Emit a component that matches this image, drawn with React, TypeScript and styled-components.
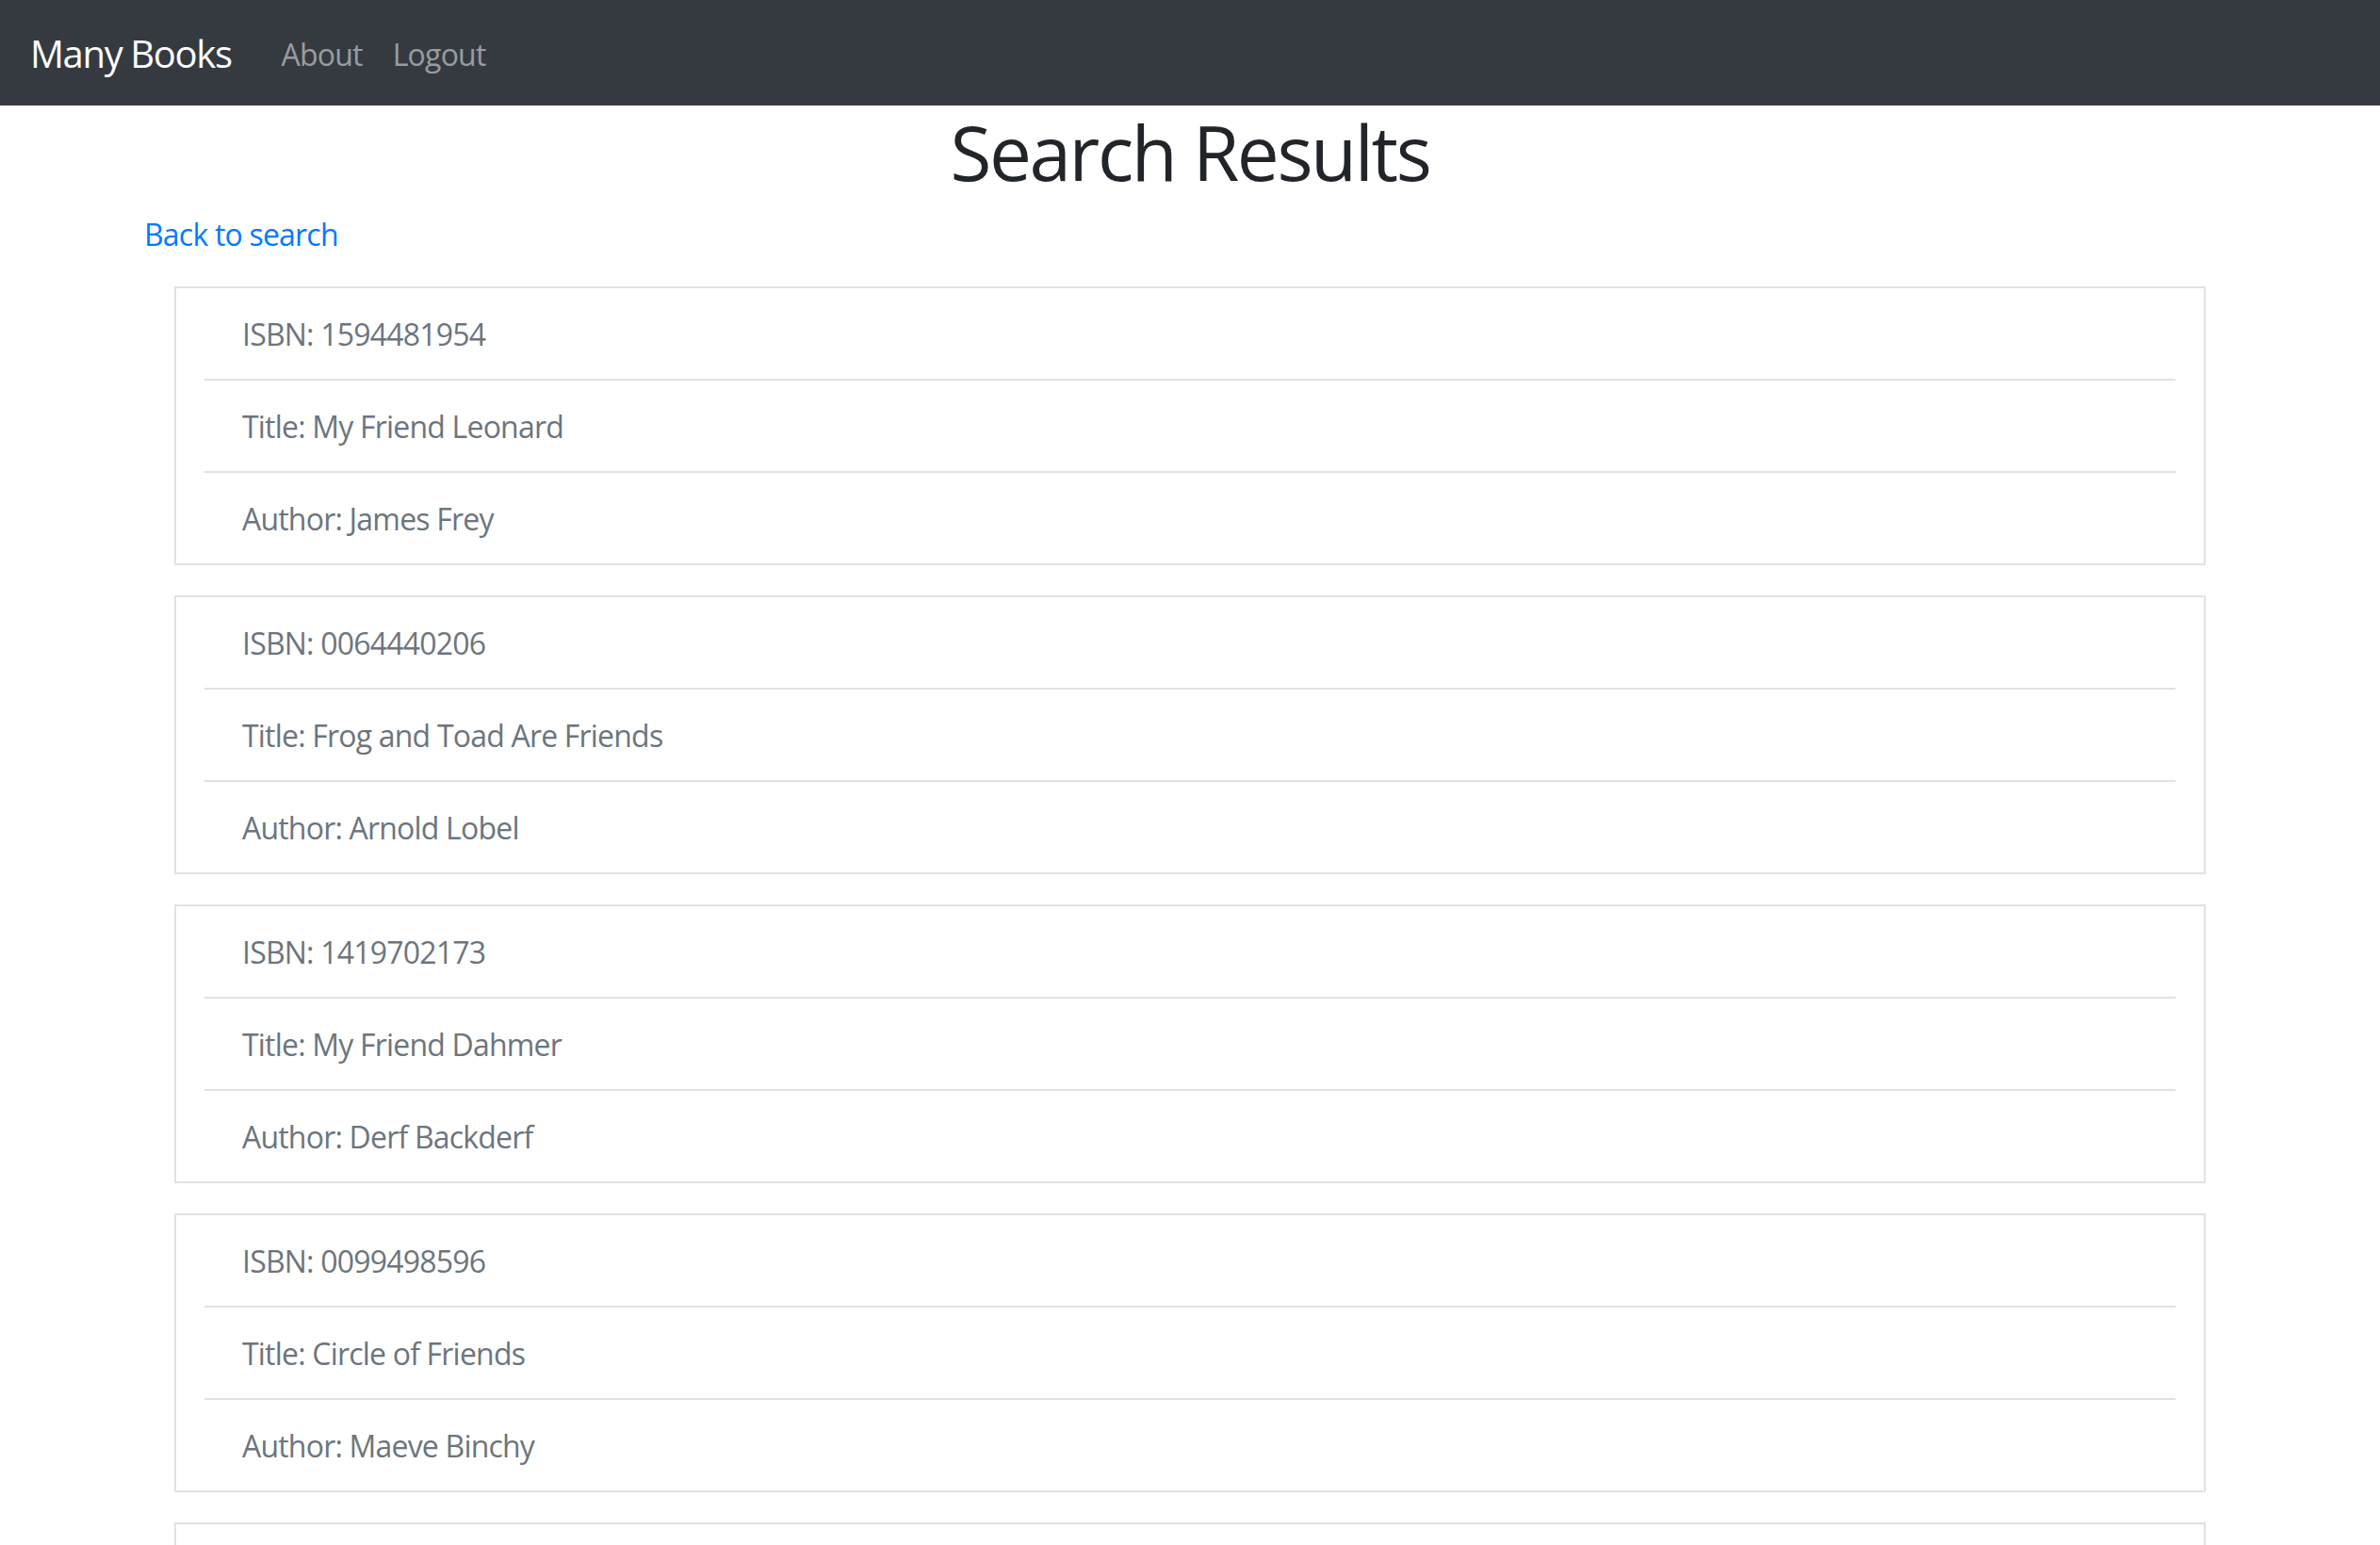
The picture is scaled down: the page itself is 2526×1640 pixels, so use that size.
import React from "react";
import styled, { createGlobalStyle } from "styled-components";

const GlobalStyle = createGlobalStyle`
  html, body {
    margin: 0;
    padding: 0;
    background: #ffffff;
  }
  body {
    font-family: "Segoe UI", "Open Sans", "Noto Sans", sans-serif;
    font-size: 32px;
    line-height: 1.5;
    letter-spacing: -0.025em;
    color: #212529;
  }
  *, *::before, *::after { box-sizing: border-box; }
`;

const NavBar = styled.nav`
  display: flex;
  align-items: center;
  height: 112px;
  padding: 16px 32px;
  background: #343a40;
`;

const Brand = styled.a`
  font-size: 40px;
  line-height: 60px;
  padding: 11px 0 9px;
  margin-right: 37px;
  letter-spacing: -0.034em;
  color: #ffffff;
  text-decoration: none;
  white-space: nowrap;
`;

const NavLinks = styled.div`
  display: flex;
  align-items: center;
`;

const NavLink = styled.a`
  font-size: 32px;
  line-height: 48px;
  padding: 18px 16px 14px;
  color: rgba(255, 255, 255, 0.5);
  text-decoration: none;
`;

const Container = styled.main`
  width: 2280px;
  margin: 0 auto;
  padding: 0 30px;
`;

const Heading = styled.h1`
  margin: 0 0 16px;
  padding-top: 2px;
  height: 96px;
  font-size: 80px;
  font-weight: 500;
  line-height: 94px;
  letter-spacing: -0.03em;
  text-align: center;
  color: #212529;
`;

const BackLink = styled.a`
  display: inline-block;
  margin-bottom: 32px;
  padding-top: 1px;
  height: 48px;
  font-size: 32px;
  line-height: 47px;
  color: #007bff;
  text-decoration: none;
`;

const Results = styled.div`
  display: flex;
  flex-direction: column;
  gap: 32px;
  padding: 0 32px;
`;

const Card = styled.ul`
  list-style: none;
  margin: 0;
  padding: 0 30px;
  border: 2px solid #dfe2e6;
`;

const Item = styled.li`
  padding: 25px 40px 23px;
  font-size: 32px;
  line-height: 48px;
  color: #6c757d;
  & + & {
    border-top: 2px solid #dfe2e6;
  }
`;

type Book = { isbn: string; title: string; author: string };

const books: Book[] = [
  { isbn: "1594481954", title: "My Friend Leonard", author: "James Frey" },
  { isbn: "0064440206", title: "Frog and Toad Are Friends", author: "Arnold Lobel" },
  { isbn: "1419702173", title: "My Friend Dahmer", author: "Derf Backderf" },
  { isbn: "0099498596", title: "Circle of Friends", author: "Maeve Binchy" },
  { isbn: "0060256656", title: "The Giving Tree", author: "Shel Silverstein" },
];

export default function App() {
  return (
    <>
      <GlobalStyle />
      <NavBar>
        <Brand href="#">Many Books</Brand>
        <NavLinks>
          <NavLink href="#">About</NavLink>
          <NavLink href="#">Logout</NavLink>
        </NavLinks>
      </NavBar>
      <Container>
        <Heading>Search Results</Heading>
        <BackLink href="#">Back to search</BackLink>
        <Results>
          {books.map((b) => (
            <Card key={b.isbn}>
              <Item>ISBN: {b.isbn}</Item>
              <Item>Title: {b.title}</Item>
              <Item>Author: {b.author}</Item>
            </Card>
          ))}
        </Results>
      </Container>
    </>
  );
}
